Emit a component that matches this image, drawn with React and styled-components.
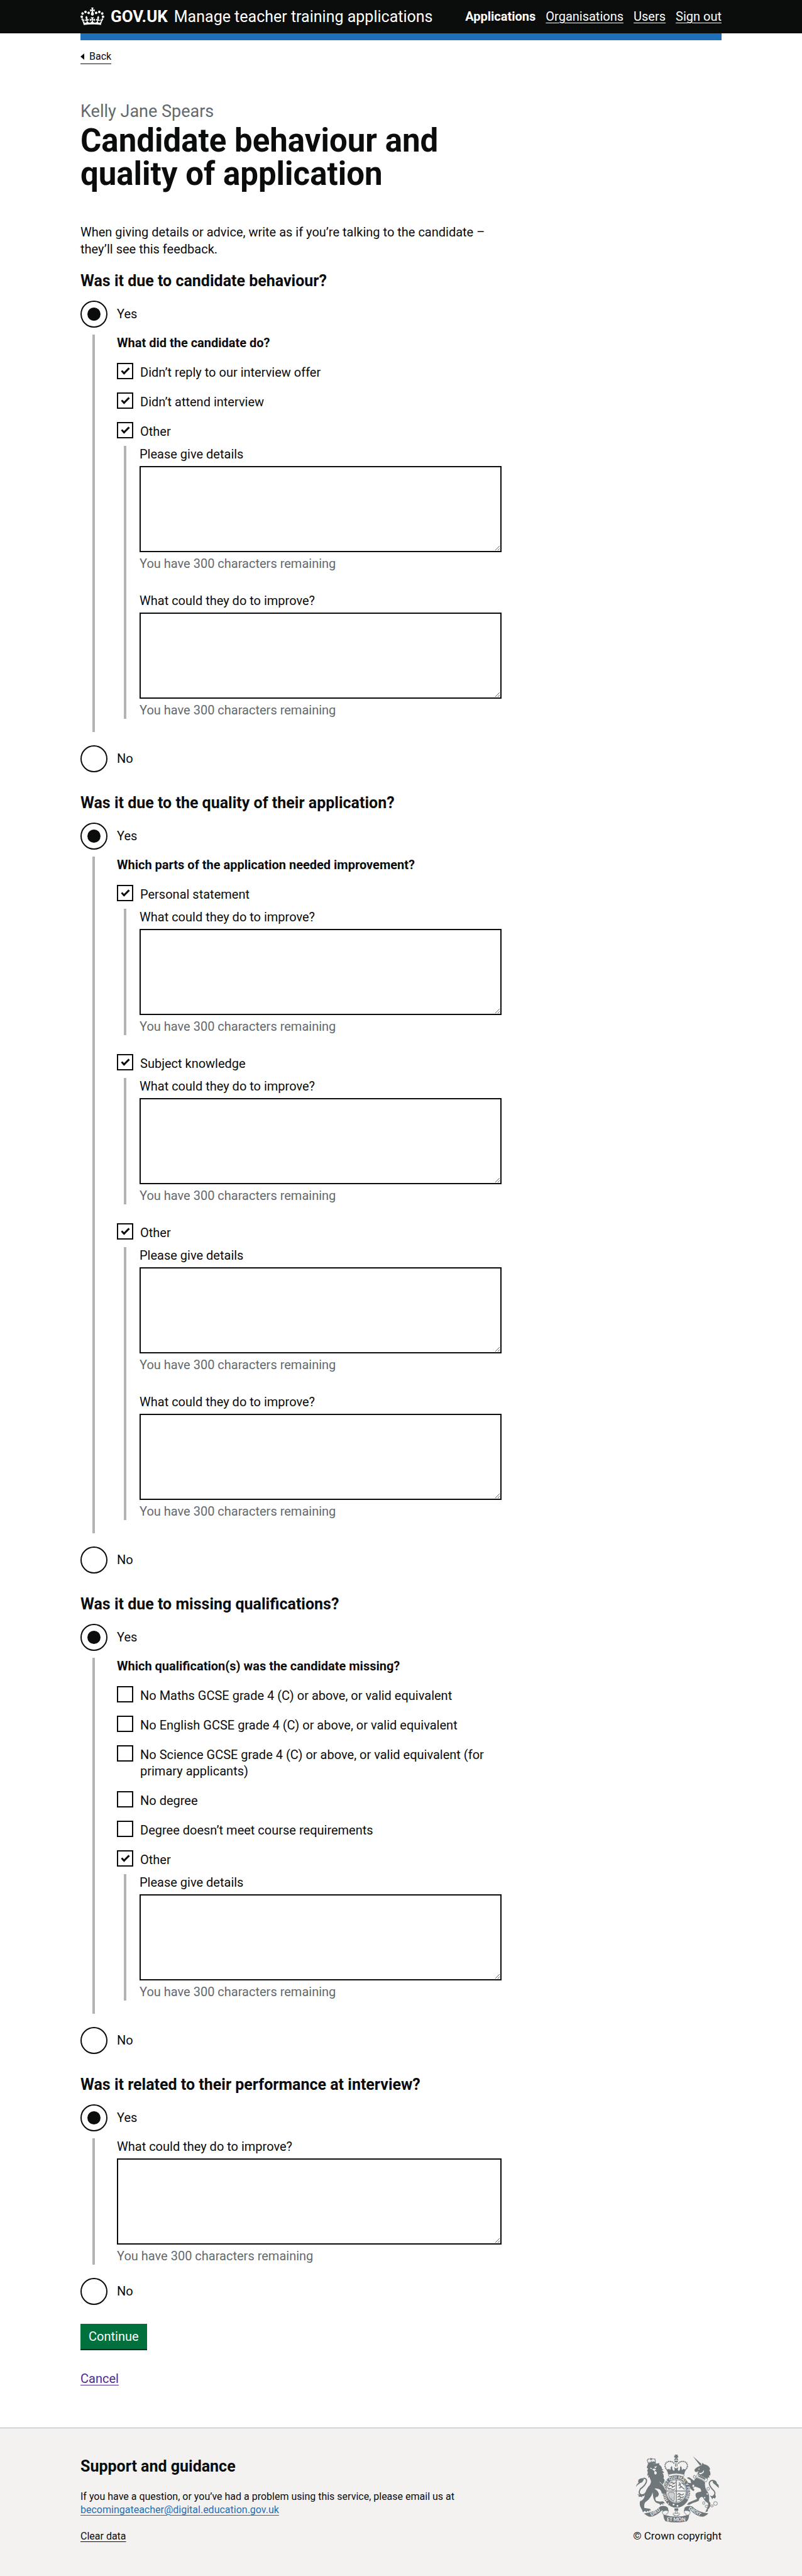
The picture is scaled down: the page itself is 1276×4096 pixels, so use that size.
import React, { useId, useState } from "react";
import styled, { createGlobalStyle, css } from "styled-components";

const color = {
  ink: "#0b0c0c",
  secondary: "#626a6e",
  blue: "#1d70b8",
  visited: "#4c2c92",
  border: "#b1b4b6",
  panel: "#f3f2f1",
  green: "#00703c",
  greenShade: "#002d18",
  crest: "#6f777b",
  white: "#ffffff",
};

const MAX_CHARACTERS = 300;

const GlobalStyle = createGlobalStyle`
  *, *::before, *::after { box-sizing: border-box; }
  body {
    margin: 0;
    background: ${color.white};
    color: ${color.ink};
    font-family: Roboto, "Liberation Sans", sans-serif;
    font-size: 20px;
    line-height: 27px;
  }
`;

const smallText = css`
  font-size: 16px;
  line-height: 21px;
`;

const underline = css`
  text-decoration: underline;
  text-decoration-thickness: 1px;
  text-underline-offset: 3px;
`;

const Container = styled.div`
  max-width: 1020px;
  margin: 0 auto;

  @media (max-width: 1060px) {
    margin: 0 16px;
  }
`;

/* Header */

const Header = styled.header`
  background: ${color.ink};
  color: ${color.white};
`;

const HeaderRow = styled(Container)`
  display: flex;
  flex-wrap: wrap;
  align-items: center;
  justify-content: space-between;
  min-height: 53px;
`;

const Brand = styled.a`
  display: flex;
  align-items: center;
  gap: 10px;
  color: inherit;
  text-decoration: none;
`;

const CrownIcon = styled.svg`
  width: 38px;
  height: 28px;
  margin-bottom: 2px;
  fill: currentColor;
`;

const LogoText = styled.span`
  font-size: 26px;
  font-weight: 700;
`;

const ServiceName = styled.span`
  font-size: 25px;
`;

const Nav = styled.nav`
  display: flex;
  gap: 16px;
`;

const NavLink = styled.a`
  color: inherit;
  ${underline}

  &[aria-current="page"] {
    font-weight: 700;
    text-decoration: none;
  }
`;

const ServiceBar = styled(Container)`
  height: 11px;
  background: ${color.blue};
`;

/* Page */

const BackLink = styled.a`
  display: flex;
  align-items: center;
  gap: 8px;
  width: fit-content;
  margin-top: 15px;
  padding-bottom: 1px;
  border-bottom: 1px solid ${color.ink};
  color: ${color.ink};
  text-decoration: none;
  ${smallText}

  &::before {
    content: "";
    border: 5px solid transparent;
    border-left-width: 0;
    border-right: 6px solid ${color.ink};
  }
`;

const Page = styled(Container)`
  display: flow-root;
`;

const Main = styled.main`
  display: grid;
  grid-template-columns: 2fr 1fr;
  column-gap: 15px;
  padding: 59px 0 64px;

  @media (max-width: 700px) {
    grid-template-columns: 1fr;
  }
`;

const Caption = styled.span`
  display: block;
  margin-bottom: 4px;
  color: ${color.secondary};
  font-size: 27px;
  font-weight: 400;
  line-height: 32px;
`;

const PageTitle = styled.h1`
  margin: 0 0 53px;
  font-size: 51px;
  font-weight: 700;
  line-height: 53px;
`;

const Intro = styled.p`
  margin: 0 0 23px;
`;

/* Form */

const Group = styled.fieldset`
  min-width: 0;
  margin: 0;
  padding: 0;
  border: 0;
`;

const Question = styled(Group)`
  margin-bottom: ${(p) => (p.$last ? 30 : 35)}px;
`;

const QuestionTitle = styled.legend`
  margin-bottom: 18px;
  padding: 0;
  font-size: 25px;
  font-weight: 700;
`;

const SubGroup = styled(Group)`
  padding-bottom: 21px;
`;

const SubTitle = styled.legend`
  margin-bottom: 18px;
  padding: 0;
  font-weight: 700;
`;

const RadioRow = styled.div`
  display: flex;
  align-items: center;
  gap: 15px;
`;

const Radio = styled.input.attrs({ type: "radio" })`
  display: grid;
  flex: none;
  place-content: center;
  appearance: none;
  width: 43px;
  height: 43px;
  margin: 0;
  border: 2px solid ${color.ink};
  border-radius: 50%;
  background: ${color.white};

  &:checked::before {
    content: "";
    width: 21px;
    height: 21px;
    border-radius: 50%;
    background: ${color.ink};
  }
`;

const RadioPanel = styled.div`
  margin: 11px 0 21px 19px;
  padding-left: 35px;
  border-left: 4px solid ${color.border};
`;

const CheckList = styled.div`
  display: flex;
  flex-direction: column;
  gap: 18px;
`;

const CheckRow = styled.div`
  display: flex;
  align-items: flex-start;
  gap: 11px;
`;

const Checkbox = styled.input.attrs({ type: "checkbox" })`
  display: grid;
  flex: none;
  place-content: center;
  appearance: none;
  width: 26px;
  height: 26px;
  margin: 0;
  border: 2px solid ${color.ink};
  background: ${color.white};

  &:checked::before {
    content: "";
    width: 13px;
    height: 7px;
    margin-bottom: 4px;
    border: solid ${color.ink};
    border-width: 0 0 3px 3px;
    transform: rotate(-45deg);
  }
`;

const CheckLabel = styled.label`
  padding: 2px 0 1px;
  line-height: 26px;
`;

const CheckPanel = styled.div`
  display: flex;
  flex-direction: column;
  gap: 32px;
  margin: 9px 0 ${(p) => (p.$last ? 0 : 12)}px 11px;
  padding-left: 21px;
  border-left: 4px solid ${color.border};
`;

const FieldBox = styled.div`
  display: flex;
  flex-direction: column;
  gap: 5px;
`;

const TextArea = styled.textarea`
  display: block;
  width: 100%;
  height: 137px;
  margin: 0;
  padding: 5px;
  border: 2px solid ${color.ink};
  border-radius: 0;
  background: ${color.white};
  font: inherit;
  resize: vertical;
`;

const Count = styled.div`
  color: ${color.secondary};
`;

const SubmitButton = styled.button`
  display: block;
  margin: 0 0 34px;
  padding: 7px 13px 6px;
  border: 0;
  background: ${color.green};
  box-shadow: 0 2px 0 ${color.greenShade};
  color: ${color.white};
  font: inherit;
`;

const TextLink = styled.a`
  color: ${(p) => color[p.$tone]};
  ${underline}
`;

/* Footer */

const Footer = styled.footer`
  padding: 42px 0 53px;
  border-top: 1px solid ${color.border};
  background: ${color.panel};
  ${smallText}
`;

const FooterRow = styled(Container)`
  display: flex;
  flex-wrap: wrap;
  align-items: flex-end;
  justify-content: space-between;
  gap: 16px;
`;

const FooterTitle = styled.h2`
  margin: 0 0 24px;
  font-size: 25px;
  line-height: 27px;
`;

const FooterText = styled.p`
  margin: 0 0 21px;
`;

const Copyright = styled.a`
  display: flex;
  flex-direction: column;
  align-items: center;
  gap: 11px;
  color: ${color.ink};
  font-size: 17px;
  text-decoration: none;
`;

const CrestIcon = styled.svg`
  width: 133px;
  height: 108px;
`;

const CrestText = styled.text`
  fill: ${color.panel};
  font-family: Lato, sans-serif;
  font-weight: 700;
`;

function Crown() {
  return (
    <CrownIcon viewBox="0 0 132 97" aria-hidden="true">
      <path d="M25 30.2c3.5 1.5 7.7-.2 9.1-3.7 1.5-3.6-.2-7.8-3.9-9.2-3.6-1.4-7.6.3-9.1 3.9-1.4 3.5.3 7.5 3.9 9zM9 39.5c3.6 1.5 7.8-.2 9.2-3.7 1.5-3.6-.2-7.8-3.9-9.1-3.6-1.5-7.6.2-9.1 3.8-1.4 3.5.3 7.5 3.8 9zM4.4 57.2c3.5 1.5 7.7-.2 9.1-3.8 1.5-3.6-.2-7.7-3.9-9.1-3.5-1.5-7.6.3-9.1 3.8-1.4 3.5.3 7.6 3.9 9.1zm38.3-21.4c3.5 1.5 7.7-.2 9.1-3.8 1.5-3.6-.2-7.7-3.9-9.1-3.6-1.5-7.6.3-9.1 3.8-1.3 3.6.4 7.7 3.9 9.1zm64.4-5.6c-3.6 1.5-7.8-.2-9.1-3.7-1.5-3.6.2-7.8 3.8-9.2 3.6-1.4 7.7.3 9.2 3.9 1.3 3.5-.4 7.5-3.9 9zm15.9 9.3c-3.6 1.5-7.7-.2-9.1-3.7-1.5-3.6.2-7.8 3.7-9.1 3.6-1.5 7.7.2 9.2 3.8 1.5 3.5-.3 7.5-3.8 9zm4.7 17.7c-3.6 1.5-7.8-.2-9.2-3.8-1.5-3.6.2-7.7 3.9-9.1 3.6-1.5 7.7.3 9.2 3.8 1.3 3.5-.4 7.6-3.9 9.1zM89.3 35.8c-3.6 1.5-7.8-.2-9.2-3.8-1.4-3.6.2-7.7 3.9-9.1 3.6-1.5 7.7.3 9.2 3.8 1.4 3.6-.3 7.7-3.9 9.1zM69.7 17.7l8.9 4.7V9.3l-8.9 2.8c-.2-.3-.5-.6-.9-.9L72.4 0H59.6l3.5 11.2c-.3.3-.6.5-.9.9l-8.8-2.8v13.1l8.8-4.7c.3.3.6.7.9.9l-5 15.4v.1c-.2.8-.4 1.6-.4 2.4 0 4.1 3.1 7.5 7 8.1h.2c.3 0 .7.1 1 .1.4 0 .7 0 1-.1h.2c4-.6 7.1-4.1 7.1-8.1 0-.8-.1-1.7-.4-2.4V34l-5.1-15.4c.4-.2.7-.6 1-.9zM66 92.8c16.9 0 32.8 1.1 47.1 3.2 4-16.9 8.9-26.7 14-33.5l-9.6-3.4c1 4.9 1.1 7.2 0 10.2-1.5-1.4-3-4.3-4.2-8.7L108.6 76c2.8-2 5-3.2 7.5-3.3-4.4 9.4-10 11.9-13.6 11.2-4.3-.8-6.3-4.6-5.6-7.9 1-4.7 5.7-5.9 8-.5 4.3-8.7-3-11.4-7.6-8.8 7.1-7.2 7.9-13.5 2.1-21.1-8 6.1-8.1 12.3-4.5 20.8-4.7-5.4-12.1-2.5-9.5 6.2 3.4-5.2 7.9-2 7.2 3.1-.6 4.3-6.4 7.8-13.5 7.2-10.3-.9-10.9-8-11.2-13.8 2.5-.5 7.1 1.8 11 7.3L80.2 60c-4.1 4.4-8 5.3-12.3 5.4 1.4-4.4 8-11.6 8-11.6H55.5s6.4 7.2 7.9 11.6c-4.2-.1-8-1-12.3-5.4l1.4 16.4c3.9-5.5 8.5-7.7 10.9-7.3-.3 5.8-.9 12.8-11.1 13.8-7.2.6-12.9-2.9-13.5-7.2-.7-5 3.8-8.3 7.1-3.1 2.7-8.7-4.6-11.6-9.4-6.2 3.7-8.5 3.6-14.7-4.6-20.8-5.8 7.6-5 13.9 2.2 21.1-4.7-2.6-11.9.1-7.7 8.8 2.3-5.5 7.1-4.2 8.1.5.7 3.3-1.3 7.1-5.7 7.9-3.5.7-9-1.8-13.5-11.2 2.5.1 4.7 1.3 7.5 3.3l-4.7-15.4c-1.2 4.4-2.7 7.2-4.3 8.7-1.1-3-.9-5.3 0-10.2l-9.5 3.4c5 6.9 9.9 16.7 14 33.6 14.8-2.1 30.8-3.2 47.7-3.2z" />
    </CrownIcon>
  );
}

function Crest() {
  return (
    <CrestIcon viewBox="0 0 750 612" fill={color.crest} stroke="none" aria-hidden="true">
      {/* Garter and shield */}
      <ellipse cx="367" cy="331" rx="125" ry="147" />
      <ellipse cx="366" cy="328" rx="92" ry="106" fill={color.panel} />
      <ellipse cx="366" cy="328" rx="86" ry="100" fill="none" stroke={color.crest} strokeWidth="4" />
      <path d="M366 226V430M278 328H454" fill="none" stroke={color.crest} strokeWidth="8" />
      <g fill="none" stroke={color.crest} strokeWidth="8" strokeLinecap="round">
        <path d="M318 256q12-12 22 0t16-6M300 268l10 8M302 284q14-12 26 0t26-4M292 300l14 8M298 312q14-10 26 0t28-2M336 256v10M330 288v8" />
        <path d="M380 358q12-12 24 0t28-4M380 382q12-12 24 0t26-4M380 406q10-10 20 0t16-4M398 362v8M402 388v8" />
        <path d="M392 254q14 4 10 20t18 20M416 258q16 0 20 16M394 300q14-2 20-14M424 300q12 2 14 12M388 276l12-8" />
      </g>
      <g fill="none" stroke={color.crest} strokeWidth="6">
        <path d="M296 346q24-12 52 0v58q0 12-12 8-36-12-40-66z" />
        <path d="M310 346q2 34 16 56M322 344q0 32 10 58M334 344q0 30 6 56" strokeWidth="3" />
      </g>
      <path id="garter" d="M298 414A99 115 0 1 1 434 414" fill="none" />
      <CrestText fontSize="36">
        <textPath href="#garter" startOffset="4">HONI SOIT QUI MAL Y PENSE</textPath>
      </CrestText>
      <path d="M296 430q-12 16 0 28l14 4q-4-16 4-28z" fill={color.panel} />
      <path d="M300 424l24 4-10 14 12 8-10 8-22-2z" />
      <circle cx="342" cy="450" r="8" fill={color.panel} />
      <circle cx="377" cy="462" r="8" fill={color.panel} />

      {/* Crown above the shield */}
      <path d="M352 0h28l-7 12 10-5v22l-10-6 6 12h-26l6-12-11 6V7l11 5z" />
      <path d="M346 50q4-16 19-17 16 1 20 17zM346 55h39q-4 15-20 16-15-1-19-16z" />
      <path d="M363 34h5v18h-5z" fill={color.panel} />
      <g fill="none" stroke={color.crest} strokeWidth="13" strokeLinecap="round" strokeDasharray="0 16">
        <path d="M344 76C316 48 262 60 265 106Q268 122 282 134" />
        <path d="M388 76C416 48 470 60 467 106Q464 122 450 134" />
      </g>
      <path d="M355 78h7v30h-7zM369 78h7v30h-7z" />
      <path d="M292 178Q290 148 268 126Q292 138 304 128L310 140Q322 128 314 118Q324 112 324 100Q334 112 330 120Q326 132 338 142L346 148L352 132L346 114L365 124L386 114L379 132L386 148Q404 140 400 122Q398 112 408 100Q408 112 416 118Q410 130 422 140L428 128Q442 138 464 126Q440 148 440 178Q366 160 292 178z" />
      <path d="M300 178Q366 160 432 178Q442 184 434 196L418 196Q366 178 316 196L300 196Q290 184 300 178z" fill={color.panel} stroke={color.crest} strokeWidth="5" />

      {/* Lion */}
      <path d="M112 82Q160 88 214 76L212 92Q238 104 236 128L250 134L236 142Q254 152 256 166L242 164Q262 196 250 214Q276 226 244 268Q250 290 276 330L276 358L262 346L256 362L246 346L236 352Q230 312 200 308Q180 302 170 306Q214 336 208 362Q200 384 182 382Q172 398 186 418L220 424Q254 412 262 440L244 438L252 454L234 444L222 458L214 442Q186 438 174 422Q156 396 154 340Q138 392 96 422Q72 436 78 480L112 486Q138 484 136 506L122 500L124 516L106 506L96 520L84 506L66 520L58 498Q28 456 40 420Q70 410 80 380Q84 320 130 270Q146 238 130 220L126 202L114 210L116 184L104 190L110 158L104 142L112 128L100 116z" />
      <path d="M130 116l22 10-16 4zM166 112l28-10-14 20zM150 132q20-12 36 2l-12 6v8q20 6 16 24-14 16-22-2-2-14 4-22-14 0-22-16z" fill={color.panel} />
      <path d="M216 248Q244 262 272 318" fill="none" stroke={color.panel} strokeWidth="5" />
      <path d="M118 88L110 66Q94 40 128 38M178 78L176 56Q184 36 150 38" fill="none" stroke={color.crest} strokeWidth="10" strokeLinecap="round" strokeDasharray="0 12" />
      <path d="M122 94L112 66L124 74L130 60L138 72L144 54L152 68L160 56L166 66L178 56L180 82Q150 80 122 94zM124 32l10 2 4-6 4 6 10-2-8 8 6 10-12-2-8 2 2-10z" />
      <path d="M70 212Q106 212 95 250Q80 284 44 308Q18 350 50 362Q80 366 98 336" fill="none" stroke={color.crest} strokeWidth="11" />
      <path d="M0 292Q6 266 26 254Q18 236 30 222Q48 208 74 214Q76 234 58 250Q22 262 0 292zM16 354l20 8 48-4-8 16-18-2 4 12-22-6-16 4 6-10z" />

      {/* Unicorn */}
      <path d="M516 14L596 86L582 100z" />
      <path d="M598 90L602 72L616 86Q662 94 672 130L664 140Q680 164 672 190L662 186L664 210L652 204L646 224Q600 196 558 172L566 146Q548 164 534 152L530 136Q552 108 584 100z" />
      <path d="M562 130l16-6-6 12zM566 162q36 12 50-24 6 32-34 40z" fill={color.panel} />
      <path d="M556 174Q600 190 650 220L638 246Q590 216 548 204z" fill={color.panel} stroke={color.crest} strokeWidth="4" />
      <path d="M562 196l4-16 8 14 8-16 8 22 10-14 6 22 10-14 6 22 10-8-6 20z" />
      <path d="M548 208Q590 220 626 248Q618 300 652 340Q668 372 662 420L674 436Q676 480 650 494L652 510L628 518L640 492Q658 460 652 436Q624 424 606 384Q588 374 574 396L568 416Q548 426 514 436L484 452L462 452L478 432L554 400Q534 370 542 350Q560 332 590 334Q592 306 572 300L530 286L516 300L530 314L524 328Q500 320 490 296L480 272L468 252L500 258L494 230L474 218L462 210Q478 198 492 210L518 230Q530 240 532 222z" />
      <g fill={color.panel} stroke={color.crest} strokeWidth="5">
        <ellipse cx="530" cy="200" rx="10" ry="13" />
        <ellipse cx="520" cy="282" rx="11" ry="14" />
        <ellipse cx="654" cy="308" rx="11" ry="14" />
        <ellipse cx="645" cy="354" rx="8" ry="10" />
        <ellipse cx="622" cy="388" rx="8" ry="10" />
        <ellipse cx="614" cy="436" rx="10" ry="13" />
        <ellipse cx="639" cy="466" rx="13" ry="10" />
        <ellipse cx="688" cy="462" rx="12" ry="9" />
        <circle cx="720" cy="440" r="17" />
      </g>
      <path d="M700 234Q664 230 664 264Q672 296 706 326Q730 356 692 380" fill="none" stroke={color.crest} strokeWidth="10" />
      <path d="M684 230Q714 222 728 244Q730 264 748 274L750 302Q722 272 704 262Q690 250 696 238zM668 368l26 8 22-18 8 20-10 18-14-8-10 14-8-16z" />

      {/* Motto ribbon */}
      <path d="M76 530Q170 520 224 466Q268 454 290 478L298 510Q272 500 246 514L240 500Q180 560 128 560Q104 556 76 530z" />
      <path d="M656 530Q564 520 508 466Q464 454 442 478L434 510Q460 500 486 514L492 500Q552 560 604 560Q630 556 656 530z" />
      <path d="M244 510Q232 530 262 548Q366 584 474 548Q500 530 488 510M290 502Q304 524 272 540M442 502Q428 524 460 540" fill="none" stroke={color.crest} strokeWidth="5" />
      <path d="M250 540Q366 580 482 540Q480 584 462 600Q366 622 270 600Q252 584 250 540z" />
      <path d="M350 484h34v22h-34z" />
      <path d="M367 500q16 16 4 32 22-12 26 4-2 14-16 8l2 8h-32l2-8q-14 6-16-8 4-16 26-4-12-16 4-32z" fill={color.panel} stroke={color.crest} strokeWidth="5" />
      <CrestText fontSize="43" x="281" y="601">ET MON</CrestText>
      <CrestText fontSize="40" transform="translate(142 554) rotate(-31)">DIEU</CrestText>
      <CrestText fontSize="39" transform="translate(476 492) rotate(31)">DROIT</CrestText>
    </CrestIcon>
  );
}

function CountedField({ label }) {
  const id = useId();
  const [text, setText] = useState("");
  return (
    <FieldBox>
      <label htmlFor={id}>{label}</label>
      <TextArea
        id={id}
        value={text}
        aria-describedby={`${id}-count`}
        onChange={(event) => setText(event.target.value)}
      />
      <Count id={`${id}-count`}>You have {MAX_CHARACTERS - text.length} characters remaining</Count>
    </FieldBox>
  );
}

function CheckItem({ item, last }) {
  const id = useId();
  const [checked, setChecked] = useState(Boolean(item.checked));
  return (
    <div>
      <CheckRow>
        <Checkbox id={id} checked={checked} onChange={(event) => setChecked(event.target.checked)} />
        <CheckLabel htmlFor={id}>{item.label}</CheckLabel>
      </CheckRow>
      {checked && item.fields && (
        <CheckPanel $last={last}>
          {item.fields.map((field) => (
            <CountedField key={field} label={field} />
          ))}
        </CheckPanel>
      )}
    </div>
  );
}

function YesNoQuestion({ title, last, children }) {
  const id = useId();
  const [answer, setAnswer] = useState("yes");
  return (
    <Question $last={last}>
      <QuestionTitle>{title}</QuestionTitle>
      <RadioRow>
        <Radio id={`${id}-yes`} name={id} checked={answer === "yes"} onChange={() => setAnswer("yes")} />
        <label htmlFor={`${id}-yes`}>Yes</label>
      </RadioRow>
      <RadioPanel>{answer === "yes" && children}</RadioPanel>
      <RadioRow>
        <Radio id={`${id}-no`} name={id} checked={answer === "no"} onChange={() => setAnswer("no")} />
        <label htmlFor={`${id}-no`}>No</label>
      </RadioRow>
    </Question>
  );
}

function Reasons({ title, items }) {
  return (
    <SubGroup>
      <SubTitle>{title}</SubTitle>
      <CheckList>
        {items.map((item, index) => (
          <CheckItem key={item.label} item={item} last={index === items.length - 1} />
        ))}
      </CheckList>
    </SubGroup>
  );
}

const DETAILS = "Please give details";
const IMPROVE = "What could they do to improve?";

const behaviour = [
  { label: "Didn’t reply to our interview offer", checked: true },
  { label: "Didn’t attend interview", checked: true },
  { label: "Other", checked: true, fields: [DETAILS, IMPROVE] },
];

const quality = [
  { label: "Personal statement", checked: true, fields: [IMPROVE] },
  { label: "Subject knowledge", checked: true, fields: [IMPROVE] },
  { label: "Other", checked: true, fields: [DETAILS, IMPROVE] },
];

const qualifications = [
  { label: "No Maths GCSE grade 4 (C) or above, or valid equivalent" },
  { label: "No English GCSE grade 4 (C) or above, or valid equivalent" },
  { label: "No Science GCSE grade 4 (C) or above, or valid equivalent (for primary applicants)" },
  { label: "No degree" },
  { label: "Degree doesn’t meet course requirements" },
  { label: "Other", checked: true, fields: [DETAILS] },
];

export default function App() {
  return (
    <>
      <GlobalStyle />
      <Header>
        <HeaderRow>
          <Brand href="#">
            <Crown />
            <LogoText>GOV.UK</LogoText>
            <ServiceName>Manage teacher training applications</ServiceName>
          </Brand>
          <Nav>
            <NavLink href="#" aria-current="page">Applications</NavLink>
            <NavLink href="#">Organisations</NavLink>
            <NavLink href="#">Users</NavLink>
            <NavLink href="#">Sign out</NavLink>
          </Nav>
        </HeaderRow>
      </Header>
      <ServiceBar />
      <Page>
        <BackLink href="#">Back</BackLink>
        <Main>
          <form onSubmit={(event) => event.preventDefault()}>
            <PageTitle>
              <Caption>Kelly Jane Spears</Caption>
              Candidate behaviour and quality of application
            </PageTitle>
            <Intro>
              When giving details or advice, write as if you’re talking to the candidate – they’ll see this feedback.
            </Intro>
            <YesNoQuestion title="Was it due to candidate behaviour?">
              <Reasons title="What did the candidate do?" items={behaviour} />
            </YesNoQuestion>
            <YesNoQuestion title="Was it due to the quality of their application?">
              <Reasons title="Which parts of the application needed improvement?" items={quality} />
            </YesNoQuestion>
            <YesNoQuestion title="Was it due to missing qualifications?">
              <Reasons title="Which qualification(s) was the candidate missing?" items={qualifications} />
            </YesNoQuestion>
            <YesNoQuestion title="Was it related to their performance at interview?" last>
              <CountedField label={IMPROVE} />
            </YesNoQuestion>
            <SubmitButton type="submit">Continue</SubmitButton>
            <TextLink href="#" $tone="visited">Cancel</TextLink>
          </form>
        </Main>
      </Page>
      <Footer>
        <FooterRow>
          <div>
            <FooterTitle>Support and guidance</FooterTitle>
            <FooterText>
              If you have a question, or you’ve had a problem using this service, please email us at
              <br />
              <TextLink href="mailto:becomingateacher@digital.education.gov.uk" $tone="blue">
                becomingateacher@digital.education.gov.uk
              </TextLink>
            </FooterText>
            <TextLink href="#" $tone="ink">Clear data</TextLink>
          </div>
          <Copyright href="#">
            <Crest />
            <span>© Crown copyright</span>
          </Copyright>
        </FooterRow>
      </Footer>
    </>
  );
}
